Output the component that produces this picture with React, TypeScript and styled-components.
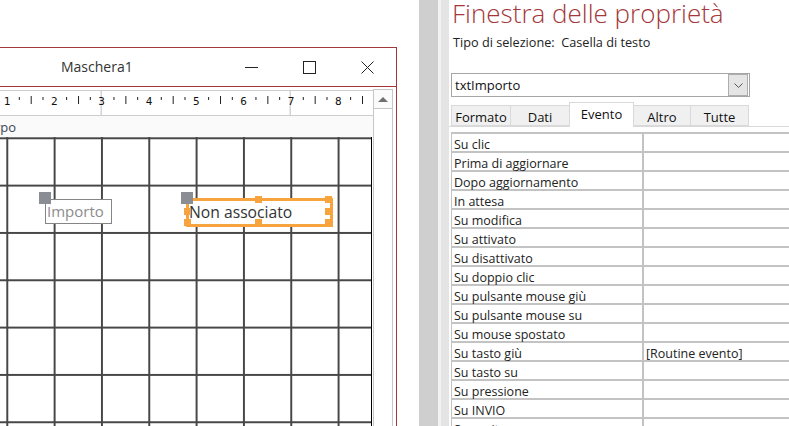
import React from 'react';
import styled, { createGlobalStyle } from 'styled-components';

const RED = '#a4373a';
const UI_FONT = "'Open Sans', 'Noto Sans', 'Liberation Sans', sans-serif";

const GlobalStyle = createGlobalStyle`
  html, body {
    margin: 0;
    padding: 0;
    background: #ffffff;
  }
  body {
    font-family: ${UI_FONT};
    color: #222;
  }
`;

const Screen = styled.div`
  width: 789px;
  height: 426px;
  overflow: hidden;
  display: flex;
  background: #fff;
`;

/* ---------- left: form designer ---------- */

const Workspace = styled.div`
  width: 419px;
  flex: none;
  padding-top: 47px;
  box-sizing: border-box;
  background: #fff;
`;

const FormWindow = styled.div`
  width: 397px;
  height: 379px;
  box-sizing: border-box;
  border-top: 1px solid ${RED};
  border-right: 1px solid ${RED};
  display: flex;
  flex-direction: column;
`;

const TitleBar = styled.div`
  height: 39px;
  flex: none;
  box-sizing: border-box;
  border-bottom: 1px solid ${RED};
  display: flex;
  align-items: center;
`;

const WindowTitle = styled.span`
  flex: 1;
  padding-left: 61px;
  font-size: 14px;
  color: #333;
  line-height: 38px;
`;

const CaptionButton = styled.div`
  width: 58px;
  height: 38px;
  display: flex;
  align-items: center;
  justify-content: center;
`;

const WindowBody = styled.div`
  flex: 1;
  display: flex;
  min-height: 0;
`;

const DesignColumn = styled.div`
  width: 373px;
  flex: none;
  display: flex;
  flex-direction: column;
`;

const RulerBar = styled.div`
  margin-top: 3px;
  height: 26px;
  box-sizing: border-box;
  border-top: 1px solid #cdcdcd;
  border-bottom: 1px solid #cdcdcd;
  flex: none;
`;

const SectionHeader = styled.div`
  height: 21px;
  flex: none;
  background: #fafafa;
  font-size: 13px;
  line-height: 23px;
  color: #3c4656;
  text-indent: -21px;
  overflow: hidden;
  white-space: nowrap;
`;

const DesignGrid = styled.div`
  position: relative;
  flex: 1;
  width: 372px;
  box-sizing: border-box;
  border-right: 1px solid #000;
  background-color: #fff;
  background-image: linear-gradient(to right, #474747 1.5px, transparent 1.5px),
    linear-gradient(to bottom, #474747 1.5px, transparent 1.5px);
  background-size: 47.33px 47.33px;
  background-position: 6.3px 0.3px;
`;

const MoveHandle = styled.div<{ $x: number; $y: number }>`
  position: absolute;
  left: ${(p) => p.$x}px;
  top: ${(p) => p.$y}px;
  width: 12px;
  height: 12px;
  background: #8a8d93;
`;

const LabelControl = styled.div`
  position: absolute;
  left: 45px;
  top: 62px;
  width: 67px;
  height: 25px;
  box-sizing: border-box;
  border: 1px solid #858585;
  background: #fff;
  font-size: 15px;
  line-height: 23px;
  padding-left: 1px;
  color: #8c8c8c;
  white-space: nowrap;
`;

const TextControl = styled.div`
  position: absolute;
  left: 186px;
  top: 61px;
  width: 147px;
  height: 29px;
  box-sizing: border-box;
  border: 3px solid #f7a43e;
  background: #fff;
  font-size: 15.7px;
  line-height: 22px;
  padding-left: 0;
  color: #333;
  white-space: nowrap;
`;

const SizeHandle = styled.div<{ $x: string; $y: string }>`
  position: absolute;
  left: ${(p) => p.$x};
  top: ${(p) => p.$y};
  width: 7px;
  height: 7px;
  margin: -5px 0 0 -5px;
  background: #f7a43e;
`;

const ScrollColumn = styled.div`
  width: 20px;
  flex: none;
  margin-top: 2px;
  box-sizing: border-box;
  border: 1px solid #c6c6c6;
  border-bottom: none;
  background: #fff;
`;

const ScrollButton = styled.div`
  height: 18px;
  border-bottom: 1px solid #c6c6c6;
  background: #fbfbfb;
  display: flex;
  align-items: center;
  justify-content: center;
`;

const ArrowUp = styled.div`
  width: 0;
  height: 0;
  border-left: 5px solid transparent;
  border-right: 5px solid transparent;
  border-bottom: 5px solid #6f6f6f;
`;

/* ---------- splitter ---------- */

const Splitter = styled.div`
  width: 30px;
  flex: none;
  display: flex;
`;

const SplitBand = styled.div<{ $w: number; $c: string }>`
  width: ${(p) => p.$w}px;
  background: ${(p) => p.$c};
`;

/* ---------- right: property sheet ---------- */

const PropertyPanel = styled.div`
  flex: 1;
  min-width: 0;
  padding-left: 2px;
  overflow: hidden;
  display: flex;
  flex-direction: column;
  background: #fff;
`;

const PanelTitle = styled.h1`
  margin: 0 0 0 1px;
  font-size: 26px;
  font-weight: 300;
  line-height: 26px;
  color: ${RED};
  white-space: nowrap;
`;

const SelectionType = styled.div`
  margin: 6px 0 0 2px;
  font-size: 12.7px;
  line-height: 20px;
  color: #222;
  white-space: pre;
`;

const ObjectCombo = styled.div`
  margin-top: 21px;
  width: 299px;
  height: 26px;
  box-sizing: border-box;
  border: 1px solid #a6a6a6;
  display: flex;
  align-items: center;
  padding: 0 1px 0 3px;
  font-size: 13px;
  color: #111;
`;

const ComboText = styled.span`
  flex: 1;
`;

const ComboButton = styled.div`
  width: 20px;
  height: 22px;
  box-sizing: border-box;
  border: 1px solid #adadad;
  background: #e5e5e5;
  display: flex;
  align-items: center;
  justify-content: center;
`;

const TabStrip = styled.div`
  margin: 5px 0 0 -3px;
  padding-left: 3px;
  height: 25px;
  box-sizing: border-box;
  border-bottom: 1px solid #d9d9d9;
  display: flex;
  align-items: flex-end;
`;

const Tab = styled.div<{ $w: number; $active?: boolean }>`
  width: ${(p) => p.$w}px;
  height: ${(p) => (p.$active ? 25 : 21)}px;
  margin-bottom: ${(p) => (p.$active ? -1 : 0)}px;
  margin-right: -1px;
  box-sizing: border-box;
  border: 1px solid #d9d9d9;
  border-bottom: ${(p) => (p.$active ? 'none' : '1px solid #d9d9d9')};
  background: ${(p) => (p.$active ? '#fff' : '#f0f0f0')};
  position: relative;
  z-index: ${(p) => (p.$active ? 1 : 0)};
  font-size: 13px;
  line-height: ${(p) => (p.$active ? 23 : 22)}px;
  text-align: center;
  color: #111;
`;

const PropGrid = styled.div`
  margin-top: 5px;
  width: 380px;
  display: grid;
  grid-template-columns: 190px 1fr;
  gap: 2px;
  padding: 2px 0 0 1px;
  background: #c3c3c3;
`;

const PropCell = styled.div`
  height: 17px;
  background: #fff;
  font-size: 12.5px;
  line-height: 21px;
  padding-left: 2px;
  color: #222;
  white-space: nowrap;
`;

const events: [string, string][] = [
  ['Su clic', ''],
  ['Prima di aggiornare', ''],
  ['Dopo aggiornamento', ''],
  ['In attesa', ''],
  ['Su modifica', ''],
  ['Su attivato', ''],
  ['Su disattivato', ''],
  ['Su doppio clic', ''],
  ['Su pulsante mouse giù', ''],
  ['Su pulsante mouse su', ''],
  ['Su mouse spostato', ''],
  ['Su tasto giù', '[Routine evento]'],
  ['Su tasto su', ''],
  ['Su pressione', ''],
  ['Su INVIO', ''],
  ['Su uscita', ''],
];

const tabs: [string, number][] = [
  ['Formato', 60],
  ['Dati', 60],
  ['Evento', 65],
  ['Altro', 58],
  ['Tutte', 59],
];

function Ruler() {
  const step = 47.33;
  const marks = [];
  for (let k = 0; k < 8; k += 1) {
    const x = 7 + step * k;
    marks.push(
      <g key={k}>
        <text x={x} y={14} fontSize="11" textAnchor="middle" fill="#111" fontFamily="'DejaVu Sans Mono', monospace">
          {k + 1}
        </text>
        <rect x={x + 11.8} y={6} width={1} height={3} fill="#222" />
        <rect x={x + 23.7} y={5} width={1} height={8} fill="#222" />
        <rect x={x + 35.5} y={6} width={1} height={3} fill="#222" />
      </g>,
    );
  }
  return (
    <svg width="373" height="24" style={{ display: 'block' }}>
      <rect x={100.5} y={0} width={1.5} height={24} fill="#d4d4d4" />
      <rect x={289.5} y={0} width={1.5} height={24} fill="#d4d4d4" />
      {marks}
    </svg>
  );
}

const handleSpots: [string, string][] = [
  ['50%', '0'],
  ['100%', '0'],
  ['0', '50%'],
  ['100%', '50%'],
  ['0', '100%'],
  ['50%', '100%'],
  ['100%', '100%'],
];

export default function App() {
  return (
    <>
      <GlobalStyle />
      <Screen>
        <Workspace>
          <FormWindow>
            <TitleBar>
              <WindowTitle>Maschera1</WindowTitle>
              <CaptionButton>
                <svg width="13" height="13" viewBox="0 0 13 13">
                  <line x1="0" y1="6.5" x2="13" y2="6.5" stroke="#222" strokeWidth="1" />
                </svg>
              </CaptionButton>
              <CaptionButton>
                <svg width="13" height="13" viewBox="0 0 13 13">
                  <rect x="0.5" y="0.5" width="12" height="12" fill="none" stroke="#222" strokeWidth="1" />
                </svg>
              </CaptionButton>
              <CaptionButton>
                <svg width="13" height="13" viewBox="0 0 13 13">
                  <path d="M0.5 0.5 L12.5 12.5 M12.5 0.5 L0.5 12.5" stroke="#222" strokeWidth="1" />
                </svg>
              </CaptionButton>
            </TitleBar>
            <WindowBody>
              <DesignColumn>
                <RulerBar>
                  <Ruler />
                </RulerBar>
                <SectionHeader>Corpo</SectionHeader>
                <DesignGrid>
                  <LabelControl>Importo</LabelControl>
                  <MoveHandle $x={39} $y={55} />
                  <TextControl>
                    Non associato
                    {handleSpots.map(([x, y]) => (
                      <SizeHandle key={x + y} $x={x} $y={y} />
                    ))}
                  </TextControl>
                  <MoveHandle $x={181} $y={55} />
                </DesignGrid>
              </DesignColumn>
              <ScrollColumn>
                <ScrollButton>
                  <ArrowUp />
                </ScrollButton>
              </ScrollColumn>
            </WindowBody>
          </FormWindow>
        </Workspace>

        <Splitter>
          <SplitBand $w={19} $c="#cfcfcf" />
          <SplitBand $w={3} $c="#f2f2f2" />
          <SplitBand $w={8} $c="#e4e4e4" />
        </Splitter>

        <PropertyPanel>
          <PanelTitle>Finestra delle proprietà</PanelTitle>
          <SelectionType>{'Tipo di selezione:  Casella di testo'}</SelectionType>
          <ObjectCombo>
            <ComboText>txtImporto</ComboText>
            <ComboButton>
              <svg width="9" height="5" viewBox="0 0 9 5">
                <path d="M0.5 0.5 L4.5 4.5 L8.5 0.5" fill="none" stroke="#555" strokeWidth="1" />
              </svg>
            </ComboButton>
          </ObjectCombo>
          <TabStrip>
            {tabs.map(([label, w]) => (
              <Tab key={label} $w={w} $active={label === 'Evento'}>
                {label}
              </Tab>
            ))}
          </TabStrip>
          <PropGrid>
            {events.map(([name, value]) => (
              <React.Fragment key={name}>
                <PropCell>{name}</PropCell>
                <PropCell>{value}</PropCell>
              </React.Fragment>
            ))}
          </PropGrid>
        </PropertyPanel>
      </Screen>
    </>
  );
}
